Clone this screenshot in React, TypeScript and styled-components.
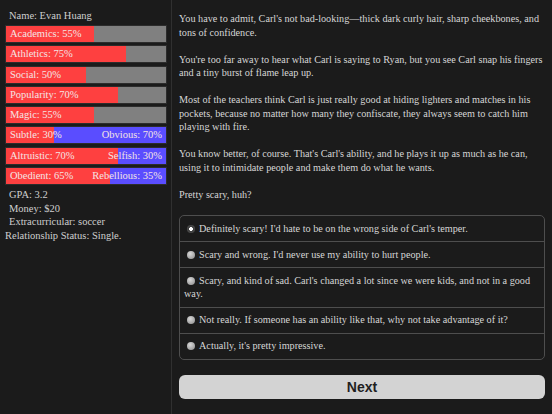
import React from "react";
import styled, { createGlobalStyle } from "styled-components";

const Global = createGlobalStyle`
  html, body {
    margin: 0;
    padding: 0;
    background: #1b1b1b;
  }
  body {
    font-family: "Liberation Serif", "DejaVu Serif", serif;
    color: #d6d6d6;
  }
`;

const Page = styled.div`
  display: flex;
  width: 552px;
  height: 414px;
  overflow: hidden;
  background: #1b1b1b;
`;

const Sidebar = styled.aside`
  width: 172px;
  flex-shrink: 0;
  border-right: 1px solid #303030;
  padding: 8px 0 0 5px;
  box-sizing: border-box;
  font-size: 10.5px;
`;

const Name = styled.div`
  padding-left: 4px;
  height: 17px;
  line-height: 15px;
  color: #cfcfcf;
`;

const Bars = styled.div`
  display: flex;
  flex-direction: column;
  gap: 2.3px;
  width: 162px;
`;

const Bar = styled.div<{ $left: string; $right: string; $pct: number }>`
  height: 18px;
  box-sizing: border-box;
  border: 1px solid #2c2c2c;
  background: linear-gradient(
    to right,
    ${(p) => p.$left} ${(p) => p.$pct}%,
    ${(p) => p.$right} ${(p) => p.$pct}%
  );
  display: flex;
  justify-content: space-between;
  align-items: center;
  padding: 0 4px;
  color: #f4e4e4;
  line-height: 16px;
`;

const Stats = styled.div`
  padding-top: 3px;
  line-height: 13.6px;
  color: #cfcfcf;
`;

const Stat = styled.div<{ $flush?: boolean }>`
  padding-left: ${(p) => (p.$flush ? "0" : "4px")};
`;

const Main = styled.main`
  flex: 1;
  padding: 12px 7px 0 7px;
  box-sizing: border-box;
  font-size: 10.2px;
  line-height: 13.5px;
`;

const Para = styled.p<{ $last?: boolean }>`
  margin: 0 0 ${(p) => (p.$last ? "0" : "13.5px")} 0;
`;

const Options = styled.div`
  margin-top: 14px;
  border: 1px solid #4e4e4e;
  border-radius: 5px;
  overflow: hidden;
`;

const Option = styled.label`
  display: block;
  padding: 5.75px 6px 5.75px 4px;
  border-top: 1px solid #4e4e4e;
  &:first-child {
    border-top: none;
  }
`;

const Radio = styled.span<{ $checked?: boolean }>`
  display: inline-block;
  width: 8px;
  height: 8px;
  border-radius: 50%;
  margin: 0 4px 0 3px;
  vertical-align: -1px;
  background: ${(p) =>
    p.$checked
      ? "radial-gradient(circle, #ffffff 0 1.6px, #3a3a3a 2.2px, #5a5a5a 100%)"
      : "radial-gradient(circle at 40% 35%, #d8d8d8, #8a8a8a)"};
`;

const NextButton = styled.button`
  display: block;
  width: 100%;
  margin-top: 15px;
  height: 24px;
  border: none;
  border-radius: 6px;
  background: #d3d3d3;
  color: #1f1f1f;
  font-family: "Liberation Sans", Arial, sans-serif;
  font-weight: bold;
  font-size: 14px;
  padding: 0;
`;

const bars = [
  { left: "Academics: 55%", pct: 55 },
  { left: "Athletics: 75%", pct: 75 },
  { left: "Social: 50%", pct: 50 },
  { left: "Popularity: 70%", pct: 70 },
  { left: "Magic: 55%", pct: 55 },
];

const opposed = [
  { left: "Subtle: 30%", right: "Obvious: 70%", pct: 30 },
  { left: "Altruistic: 70%", right: "Selfish: 30%", pct: 70 },
  { left: "Obedient: 65%", right: "Rebellious: 35%", pct: 65 },
];

const paragraphs = [
  "You have to admit, Carl's not bad-looking\u2014thick dark curly hair, sharp cheekbones, and tons of confidence.",
  "You're too far away to hear what Carl is saying to Ryan, but you see Carl snap his fingers and a tiny burst of flame leap up.",
  "Most of the teachers think Carl is just really good at hiding lighters and matches in his pockets, because no matter how many they confiscate, they always seem to catch him playing with fire.",
  "You know better, of course. That's Carl's ability, and he plays it up as much as he can, using it to intimidate people and make them do what he wants.",
  "Pretty scary, huh?",
];

const choices = [
  "Definitely scary! I'd hate to be on the wrong side of Carl's temper.",
  "Scary and wrong. I'd never use my ability to hurt people.",
  "Scary, and kind of sad. Carl's changed a lot since we were kids, and not in a good way.",
  "Not really. If someone has an ability like that, why not take advantage of it?",
  "Actually, it's pretty impressive.",
];

export default function App() {
  return (
    <Page>
      <Global />
      <Sidebar>
        <Name>Name: Evan Huang</Name>
        <Bars>
          {bars.map((b) => (
            <Bar key={b.left} $left="#fe4040" $right="#808080" $pct={b.pct}>
              <span>{b.left}</span>
            </Bar>
          ))}
          {opposed.map((b) => (
            <Bar key={b.left} $left="#fe4040" $right="#5a4dff" $pct={b.pct}>
              <span>{b.left}</span>
              <span>{b.right}</span>
            </Bar>
          ))}
        </Bars>
        <Stats>
          <Stat>GPA: 3.2</Stat>
          <Stat>Money: $20</Stat>
          <Stat>Extracurricular: soccer</Stat>
          <Stat $flush>Relationship Status: Single.</Stat>
        </Stats>
      </Sidebar>
      <Main>
        {paragraphs.map((t, i) => (
          <Para key={i} $last={i === paragraphs.length - 1}>
            {t}
          </Para>
        ))}
        <Options>
          {choices.map((c, i) => (
            <Option key={c}>
              <Radio $checked={i === 0} />
              {c}
            </Option>
          ))}
        </Options>
        <NextButton>Next</NextButton>
      </Main>
    </Page>
  );
}
